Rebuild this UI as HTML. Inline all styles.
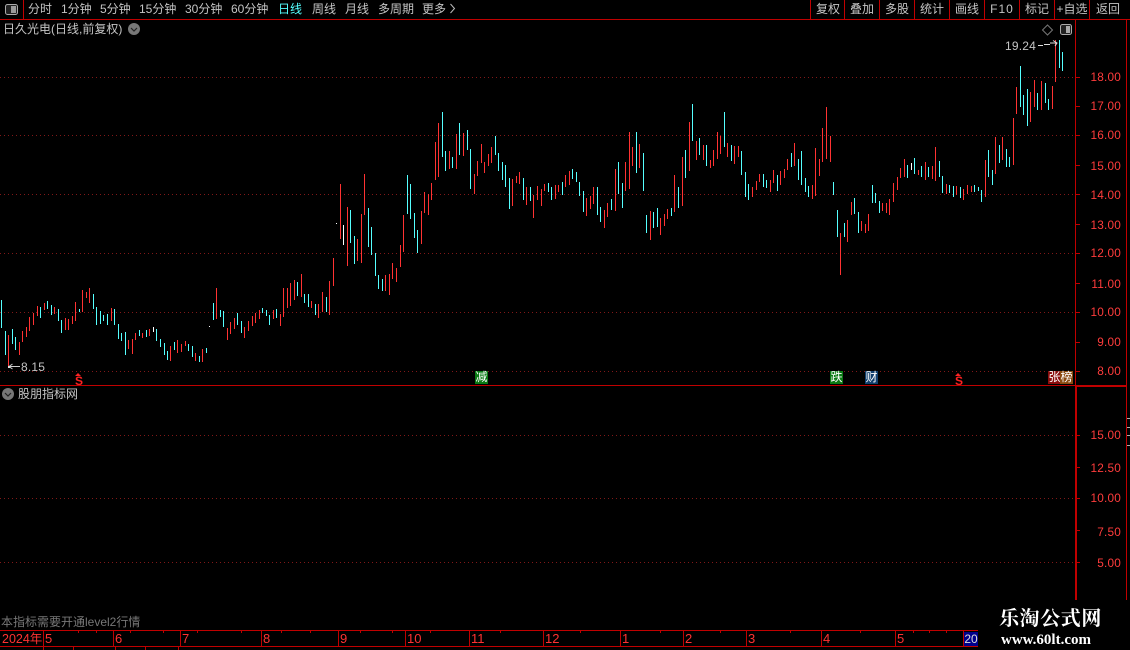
<!DOCTYPE html>
<html><head><meta charset="utf-8"><style>
html,body{margin:0;padding:0;background:#000;width:1130px;height:650px;overflow:hidden}
#r{position:relative;width:1130px;height:650px;background:#000;overflow:hidden;font-family:"Liberation Sans","WenQuanYi Zen Hei","Noto Sans CJK SC",sans-serif;font-size:12px;color:#c4c4c4}
#r div{position:absolute;white-space:nowrap;line-height:14px;height:14px}
.t{top:2px}
.b{top:2px;width:34px;text-align:center}
.p{left:1081px;width:40px;text-align:right;color:#ff3c3c;letter-spacing:.2px;font-size:11.8px}
.d{top:632px;color:#ff3232;font-size:13px}
.m{top:371px;width:13px;height:13px!important;line-height:13px!important;text-align:center;color:#fff;font-size:12px}
svg{position:absolute;left:0;top:0}
</style></head><body><div id="r">
<svg width="1130" height="650" shape-rendering="crispEdges" fill="none">
<g stroke="#801818" stroke-dasharray="1 3">
<path d="M0 77.5H1075M0 135.5H1075M0 194.5H1075M0 253.5H1075M0 312.5H1075M0 371.5H1075M0 435.5H1075M0 498.5H1075M0 562.5H1075"/>
</g>
<g stroke="#c00000">
<path d="M0 19.5H1130M23.5 0V19M810.5 0V19M844.5 0V19M879.5 0V19M914.5 0V19M949.5 0V19M984.5 0V19M1019.5 0V19M1054.5 0V19M1089.5 0V19"/>
<path d="M1075.5 20V385M0 385.5H1075"/>
<path d="M1075 77.5H1080M1075 106.5H1080M1075 135.5H1080M1075 165.5H1080M1075 194.5H1080M1075 224.5H1080M1075 253.5H1080M1075 283.5H1080M1075 312.5H1080M1075 342.5H1080M1075 371.5H1080"/>
<path d="M1126.5 20V600M1075.5 386V600M1076.5 386V600M1075 385.5H1127M1075 386.5H1127"/>
<path d="M1075 435.5H1080M1075 467.5H1080M1075 498.5H1080M1075 530.5H1080M1075 562.5H1080"/>
<path d="M0 630.5H978M0 646.5H978M43.5 631V646M113.5 631V646M180.5 631V646M261.5 631V646M338.5 631V646M405.5 631V646M469.5 631V646M543.5 631V646M620.5 631V646M683.5 631V646M746.5 631V646M821.5 631V646M895.5 631V646M963.5 631V646"/>
<path d="M78.5 631V633M96.5 631V633M130.5 631V633M163.5 631V633M197.5 631V633M241.5 631V633M281.5 631V633M310.5 631V633M360.5 631V633M392.5 631V633M430.5 631V633M500.5 631V633M580.5 631V633M660.5 631V633M720.5 631V633M790.5 631V633M860.5 631V633M913.5 631V633M929.5 631V633M946.5 631V633"/>
<path d="M43.5 647V650M73.5 647V650M115.5 647V650M145.5 647V650M178.5 647V650"/>
</g>
<path stroke="#b0b0b0" d="M1127 418.5H1130M1127 427.5H1130M1127 435.5H1130M1127 445.5H1130"/>
<path stroke="#ff3232" d="M8.5 335V367M19.5 342V355M22.5 331V342M26.5 327V337M29.5 317V331M33.5 313V325M37.5 306V316M44.5 303V310M54.5 307V314M65.5 318V330M68.5 319V330M72.5 316V324M75.5 302V321M82.5 290V312M86.5 292V298M89.5 288V303M111.5 308V321M128.5 340V349M132.5 339V354M135.5 333V340M142.5 333V338M149.5 329V336M170.5 346V361M177.5 340V353M181.5 344V352M185.5 341V346M195.5 353V361M202.5 349V362M216.5 288V319M227.5 328V340M230.5 322V334M234.5 318V329M244.5 327V338M248.5 321V331M252.5 316V326M255.5 313V323M259.5 310V319M273.5 310V319M280.5 314V326M283.5 288V317M287.5 288V308M290.5 283V306M294.5 280V300M301.5 274V297M311.5 301V308M318.5 304V318M322.5 292V312M329.5 281V315M333.5 258V286M340.5 184V239M347.5 207V266M357.5 239V261M361.5 214V263M364.5 174V215M385.5 275V291M389.5 274V295M392.5 263V279M396.5 268V282M400.5 245V267M403.5 215V252M421.5 211V244M424.5 192V213M428.5 194V215M431.5 183V200M435.5 142V180M438.5 123V177M449.5 151V169M456.5 134V169M463.5 133V156M474.5 174V194M477.5 161V176M481.5 144V163M484.5 162V173M488.5 154V166M491.5 147V163M512.5 179V206M516.5 176V183M519.5 172V184M526.5 187V205M533.5 195V218M537.5 186V200M541.5 189V206M544.5 184V191M555.5 185V199M558.5 185V192M565.5 175V187M569.5 171V185M586.5 198V216M590.5 196V209M593.5 187V204M604.5 210V228M607.5 203V217M615.5 169V211M625.5 162V191M629.5 132V189M632.5 147V166M639.5 144V168M650.5 211V240M660.5 218V235M664.5 214V226M667.5 209V219M674.5 175V212M682.5 157V206M689.5 122V171M696.5 141V160M703.5 145V160M710.5 160V168M713.5 150V166M717.5 132V159M720.5 136V154M727.5 143V157M734.5 146V164M738.5 146V157M752.5 187V197M756.5 181V190M759.5 174V182M770.5 180V192M773.5 170V183M780.5 171V185M784.5 169V178M787.5 159V170M794.5 143V166M812.5 185V199M815.5 148V196M819.5 159V176M822.5 128V162M826.5 107V159M830.5 136V162M840.5 233V275M847.5 220V242M851.5 202V215M861.5 221V231M865.5 224V233M868.5 214V231M882.5 203V211M886.5 203V213M889.5 199V215M893.5 183V202M897.5 177V190M900.5 168V178M904.5 159V177M918.5 170V175M925.5 162V180M932.5 166V179M935.5 147V181M946.5 184V194M956.5 186V195M963.5 189V200M967.5 185V194M971.5 186V192M985.5 160V197M995.5 137V174M1002.5 137V160M1013.5 118V165M1016.5 87V114M1030.5 92V122M1034.5 80V107M1041.5 81V110M1052.5 86V109M1055.5 40V82"/>
<path stroke="#55ffff" d="M1.5 300V328M5.5 331V355M12.5 329V344M15.5 337V350M40.5 307V318M47.5 301V309M51.5 305V315M58.5 309V321M61.5 320V333M79.5 309V312M93.5 294V309M96.5 307V325M100.5 311V324M103.5 315V321M107.5 314V325M114.5 309V325M118.5 324V339M121.5 333V341M125.5 332V355M139.5 330V336M146.5 330V337M156.5 329V341M160.5 339V347M164.5 343V355M167.5 351V360M174.5 342V350M188.5 344V351M192.5 346V357M199.5 356V362M206.5 348V353M213.5 303V320M220.5 310V317M223.5 311V327M237.5 313V325M241.5 321V333M262.5 308V313M266.5 310V316M269.5 315V325M276.5 309V318M297.5 282V296M304.5 294V303M308.5 294V307M315.5 304V315M326.5 297V312M350.5 210V243M354.5 236V264M368.5 208V247M371.5 227V255M375.5 253V276M378.5 275V289M382.5 279V291M407.5 175V214M410.5 184V219M414.5 213V238M417.5 230V253M442.5 112V157M445.5 151V171M452.5 157V168M459.5 123V155M467.5 130V150M470.5 149V189M495.5 136V155M498.5 153V171M502.5 162V180M505.5 165V187M509.5 178V209M523.5 178V200M530.5 187V201M548.5 183V192M551.5 187V200M562.5 182V195M572.5 169V179M576.5 172V182M579.5 182V196M583.5 191V212M597.5 187V215M600.5 207V222M611.5 199V210M618.5 162V194M622.5 183V208M636.5 132V173M643.5 153V191M646.5 215V233M653.5 212V228M657.5 208V227M671.5 208V216M678.5 187V208M685.5 150V178M692.5 104V141M699.5 138V155M706.5 145V166M724.5 112V147M731.5 145V161M741.5 151V175M745.5 172V197M748.5 184V200M763.5 174V187M766.5 180V188M777.5 175V191M791.5 153V167M798.5 159V180M801.5 151V185M805.5 178V192M808.5 186V197M833.5 182V195M837.5 210V237M844.5 223V237M854.5 198V214M858.5 212V233M872.5 185V203M875.5 193V203M879.5 201V213M907.5 165V178M914.5 158V174M921.5 166V177M928.5 167V177M939.5 161V177M942.5 176V193M949.5 185V193M953.5 186V197M960.5 187V198M974.5 185V192M978.5 187V191M981.5 190V202M988.5 150V177M992.5 170V185M999.5 145V163M1006.5 149V167M1009.5 157V167M1020.5 66V107M1023.5 95V115M1027.5 89V126M1037.5 93V110M1045.5 83V103M1048.5 99V110M1059.5 40V68M1062.5 52V71"/>
<path stroke="#fff" d="M153.5 327V332M343.5 225V245M911.5 163V170M209 326.5H210M336 223.5H337"/>
<g shape-rendering="auto">
<rect x="5.5" y="4.5" width="12" height="10" rx="2" stroke="#aaa" fill="#222"/><rect x="11" y="6" width="5" height="7" fill="#999"/>
<rect x="1060.5" y="24.5" width="11" height="10" rx="2" stroke="#aaa" fill="#222"/><rect x="1066" y="26" width="4" height="7" fill="#aaa"/>
<path d="M1047.5 25L1052.5 30 1047.5 35 1042.5 30Z" stroke="#777"/>
<circle cx="134" cy="29" r="6" fill="#777"/><path d="M131 28l3 3 3-3" stroke="#222" stroke-width="1.2"/>
<circle cx="8" cy="394" r="6" fill="#777"/><path d="M5 393l3 3 3-3" stroke="#222" stroke-width="1.2"/>
<path d="M450.5 4l4 4.500-4 4.500" stroke="#bbb"/>
<path d="M1038 45.500H1043M1044 44.500H1050M1050 43H1057M1053 40.500L1057 43 1055 46" stroke="#ddd"/>
<path d="M20 366.500H10M12.500 364L9 366.500 12.500 369" stroke="#ccc"/><rect x="8" y="366" width="2" height="2" fill="#ddd"/>
<path d="M78 373L75 376H81ZM958 373L955 376H961Z" fill="#f22"/>
</g>
</svg>
<div class="t" style="left:28px">分时</div><div class="t" style="left:61px">1分钟</div><div class="t" style="left:100px">5分钟</div><div class="t" style="left:139px">15分钟</div><div class="t" style="left:185px">30分钟</div><div class="t" style="left:231px">60分钟</div><div class="t" style="left:278px;color:#55ffff">日线</div><div class="t" style="left:312px">周线</div><div class="t" style="left:345px">月线</div><div class="t" style="left:378px">多周期</div><div class="t" style="left:422px">更多</div>
<div class="b" style="left:811px">复权</div><div class="b" style="left:845px">叠加</div><div class="b" style="left:880px">多股</div><div class="b" style="left:915px">统计</div><div class="b" style="left:950px">画线</div><div class="b" style="left:985px;letter-spacing:1px">F10</div><div class="b" style="left:1020px">标记</div><div class="b" style="left:1055px">+自选</div><div class="b" style="left:1091px">返回</div>
<div style="left:3px;top:22px">日久光电(日线,前复权)</div>
<div style="left:18px;top:387px">股朋指标网</div>
<div style="left:1005px;top:39px;letter-spacing:.2px">19.24</div>
<div style="left:21px;top:360px;letter-spacing:.2px">8.15</div>
<div class="p" style="top:70px">18.00</div><div class="p" style="top:99px">17.00</div><div class="p" style="top:128px">16.00</div><div class="p" style="top:159px">15.00</div><div class="p" style="top:188px">14.00</div><div class="p" style="top:218px">13.00</div><div class="p" style="top:246px">12.00</div><div class="p" style="top:277px">11.00</div><div class="p" style="top:305px">10.00</div><div class="p" style="top:335px">9.00</div><div class="p" style="top:364px">8.00</div>
<div class="p" style="top:428px">15.00</div><div class="p" style="top:461px">12.50</div><div class="p" style="top:491px">10.00</div><div class="p" style="top:525px">7.50</div><div class="p" style="top:556px">5.00</div>
<div style="left:75px;top:376px;color:#f22;font-size:12px;font-weight:bold;line-height:10px;height:10px">S</div>
<div style="left:955px;top:376px;color:#f22;font-size:12px;font-weight:bold;line-height:10px;height:10px">S</div>
<div class="m" style="left:475px;background:#0a7a14">减</div><div class="m" style="left:830px;background:#0a7a14">跌</div><div class="m" style="left:865px;background:#12406e">财</div><div class="m" style="left:1048px;background:#8a0c0c">张</div><div class="m" style="left:1060px;background:#8a4a10">榜</div>
<div style="left:1px;top:615px;color:#777">本指标需要开通level2行情</div>
<div class="d" style="left:2px;font-size:12.5px">2024年</div><div class="d" style="left:45px">5</div><div class="d" style="left:115px">6</div><div class="d" style="left:182px">7</div><div class="d" style="left:263px">8</div><div class="d" style="left:340px">9</div><div class="d" style="left:407px">10</div><div class="d" style="left:471px">11</div><div class="d" style="left:545px">12</div><div class="d" style="left:622px">1</div><div class="d" style="left:685px">2</div><div class="d" style="left:748px">3</div><div class="d" style="left:823px">4</div><div class="d" style="left:897px">5</div>
<div style="left:964px;top:632px;width:14px;background:#00008b;color:#ddd;text-align:center;font-size:12px">20</div>
<div style="left:999px;top:609px;height:20px;line-height:20px;color:#fff;font-family:'Liberation Serif','Noto Serif CJK SC',serif;font-weight:bold;font-size:20px;letter-spacing:.6px">乐淘公式网</div>
<div style="left:1001px;top:632px;height:16px;line-height:16px;color:#fff;font-family:'Liberation Serif',serif;font-weight:bold;font-size:15px">www.60lt.com</div>
</div></body></html>
